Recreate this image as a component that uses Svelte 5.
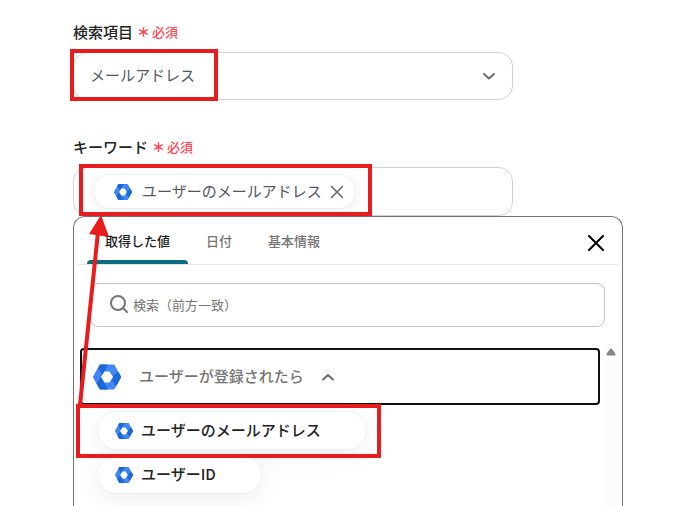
<script>
  const tabs = ['取得した値', '日付', '基本情報']
  const items = ['ユーザーのメールアドレス', 'ユーザーID']

  let activeTab = $state(0)
  let open = $state(true)
  let query = $state('')
</script>


{#snippet logo(size)}
  <svg class="logo" width={size} height={size} viewBox="0 0 28 28" aria-hidden="true">
    <path fill="#4285f4" d="M7.500 1.500H20.500L21.500 2L28 13.500V14.500L21.500 26L20.500 26.500H7.500L6.500 26L0 14.500V13.500L6.500 2Z" />
    <path fill="#1b68d6" d="M7.500 1.500H15L9.500 12L5 5L6.500 2Z" />
    <path fill="#1b68d6" d="M8 14L15 26.500H7.500L6.500 26L3.500 20.500Z" />
    <path fill="#1b68d6" d="M25 8.500L28 13.500V14.500L23 23.500L18 15.500Z" />
    <path fill="#fff" d="M11.500 8.500H16.500L20 14L16.500 19.500H11.500L8 14Z" />
  </svg>
{/snippet}

<main>
  <div class="field">
    <div class="label">
      <label for="item">検索項目</label>
      <span class="required"><i>＊</i>必須</span>
    </div>
    <div class="box">
      <select id="item">
        <option>メールアドレス</option>
      </select>
      <svg class="chevron" width="14" height="14" viewBox="0 0 14 14">
        <path d="M2 5L7 9.500L12 5" />
      </svg>
    </div>
  </div>

  <div class="field">
    <div class="label">
      <label for="keyword">キーワード</label>
      <span class="required"><i>＊</i>必須</span>
    </div>
    <div class="box keyword">
      <span class="chip">
        {@render logo(18)}
        <span>ユーザーのメールアドレス</span>
        <button aria-label="削除">
          <svg width="14" height="14" viewBox="0 0 14 14">
            <path d="M1.500 1.500L12.500 12.500M12.500 1.500L1.500 12.500" />
          </svg>
        </button>
      </span>
      <input id="keyword" type="text">
    </div>
  </div>

  <section class="panel">
    <header>
      <div class="tabs" role="tablist">
        {#each tabs as tab, i}
          <button role="tab" aria-selected={activeTab === i} class:active={activeTab === i}
            onclick={() => activeTab = i}>{tab}</button>
        {/each}
      </div>
      <button class="close" aria-label="閉じる">
        <svg width="16" height="16" viewBox="0 0 16 16">
          <path d="M1 1L15 15M15 1L1 15" />
        </svg>
      </button>
    </header>

    <div class="search">
      <svg width="20" height="20" viewBox="0 0 20 20">
        <circle cx="9" cy="8" r="7" />
        <path d="M14 13L18 17" />
      </svg>
      <input type="search" aria-label="検索" placeholder="検索（前方一致）" bind:value={query}>
    </div>

    <div class="results">
      <div class="list">
        <button class="group" aria-expanded={open} onclick={() => open = !open}>
          {@render logo(28)}
          <span>ユーザーが登録されたら</span>
          <svg class="chevron" width="14" height="14" viewBox="0 0 14 14">
            <path d="M2 9.500L7 5L12 9.500" />
          </svg>
        </button>
        {#if open}
          <div class="items">
            {#each items.filter(item => item.includes(query)) as item}
              <button class="item">
                {@render logo(18)}
                <span>{item}</span>
              </button>
            {/each}
          </div>
        {/if}
      </div>
      <div class="rail">
        <svg width="10" height="8" viewBox="0 0 10 8">
          <path d="M4 1Q5 0 6 1L9.500 6Q9.500 7.500 8.500 7.500H1.500Q0.500 7.500 0.500 6Z" />
        </svg>
      </div>
    </div>
  </section>

  <!-- callouts drawn over the form -->
  <svg class="callouts" width="400" height="480" viewBox="0 0 400 480" aria-hidden="true">
    <rect x="72" y="51" width="144" height="48" />
    <rect x="81" y="166" width="289" height="48" />
    <rect x="78" y="406" width="301" height="50" />
    <path class="line" d="M80 405L98 232" />
    <path class="head" d="M101 215L109 237L89 234Z" />
  </svg>
</main>


<style>

  :global(body) {
    margin: 0;
    background: #fff;
  }

  main {
    position: relative;
    display: flex;
    flex-direction: column;
    box-sizing: border-box;
    height: 100vh;
    padding: 20px 62px 0 73px;
    overflow: hidden;
    font-family: "Noto Sans CJK JP", sans-serif;
    font-size: 15px;
    line-height: 24px;
    color: #222;
  }

  button, input, select {
    margin: 0;
    padding: 0;
    border: 0;
    background: none;
    font: inherit;
    color: inherit;
    outline: none;
  }

  button {
    cursor: pointer;
  }

  svg {
    flex: none;
    fill: none;
    stroke-linecap: round;
    stroke-linejoin: round;
  }

  .field {
    max-width: 440px;
  }

  .field + .field {
    margin-top: 35px;
  }

  .label {
    display: flex;
    align-items: center;
    gap: 4px;
    margin-bottom: 8px;
    font-weight: 500;
  }

  .required {
    display: flex;
    gap: 2px;
    font-size: 13px;
    color: #ff4757;
  }

  .required i {
    font-style: normal;
    font-weight: 900;
  }

  .box {
    display: flex;
    align-items: center;
    box-sizing: border-box;
    min-height: 48px;
    border: 1px solid #cdd1da;
    border-radius: 14px;
    color: #53575e;
  }

  select {
    flex: 1;
    align-self: stretch;
    min-width: 0;
    padding: 0 0 2px 16px;
    appearance: none;
  }

  .chevron {
    stroke: #6b6b6b;
    stroke-width: 2;
  }

  .box .chevron {
    margin-right: 16px;
    pointer-events: none;
  }

  .keyword {
    padding: 7px 20px;
  }

  .keyword input {
    flex: 1;
    min-width: 0;
  }

  .chip {
    display: flex;
    align-items: center;
    height: 33px;
    padding: 0 11px 0 20px;
    border-radius: 17px;
    background: #fff;
    box-shadow: 0 0 2px rgba(0, 0, 0, .08), 0 2px 16px rgba(0, 0, 0, .08);
    white-space: nowrap;
  }

  .chip span {
    margin: 0 8px 0 10px;
    padding-bottom: 2px;
  }

  .chip button {
    display: flex;
    stroke: #666;
    stroke-width: 1.500;
  }

  .panel {
    position: relative;
    display: flex;
    flex: 1;
    flex-direction: column;
    max-width: 548px;
    min-height: 0;
    border: 1px solid #6f7275;
    border-bottom: 0;
    border-radius: 12px 12px 0 0;
    background: #fff;
  }

  header {
    display: flex;
    align-items: center;
    justify-content: space-between;
    margin: 0 4px;
    padding: 0 14px 0 9px;
    border-bottom: 1px solid #e2e4e6;
  }

  .tabs {
    display: flex;
    font-size: 13px;
    font-weight: 500;
    color: #757575;
  }

  .tabs button {
    position: relative;
    height: 47px;
    padding: 0 18px;
  }

  .tabs .active {
    color: #1a1a1a;
  }

  .tabs .active::after {
    content: "";
    position: absolute;
    right: 0;
    bottom: 0;
    left: 0;
    height: 4px;
    border-radius: 4px 4px 0 0;
    background: #0b6b80;
  }

  .close {
    display: flex;
    padding-top: 4px;
    stroke: #000;
    stroke-width: 2;
  }

  .search {
    display: flex;
    align-items: center;
    gap: 4px;
    height: 42px;
    margin: 18px 17px 0 16px;
    padding: 0 18px;
    border: 1px solid #c6c6c6;
    border-radius: 8px;
    font-size: 13px;
    stroke: #757575;
    stroke-width: 2;
  }

  .search input {
    flex: 1;
    min-width: 0;
  }

  .search input::placeholder {
    color: #757575;
    opacity: 1;
  }

  .results {
    display: flex;
    flex: 1;
    gap: 3px;
    min-height: 0;
    margin: 17px 4px 0 6px;
  }

  .list {
    flex: 1;
    padding-top: 4px;
  }

  .group {
    display: flex;
    align-items: center;
    box-sizing: border-box;
    width: 100%;
    height: 57px;
    padding: 0 11px;
    border: 2px solid #111;
    border-radius: 4px;
    font-weight: 500;
    color: #757575;
  }

  .group span {
    margin: 0 17px 0 18px;
    padding-bottom: 2px;
  }

  .items {
    display: flex;
    flex-direction: column;
    align-items: flex-start;
    gap: 7px;
    padding: 7px 18px;
  }

  .item {
    display: flex;
    align-items: center;
    gap: 8px;
    height: 37px;
    padding: 0 45px 0 17px;
    border-radius: 19px;
    background: #fff;
    box-shadow: 0 0 2px rgba(0, 0, 0, .08), 0 6px 24px rgba(0, 0, 0, .07);
    font-weight: 500;
    white-space: nowrap;
  }

  .item span {
    padding-bottom: 2px;
  }

  .rail {
    width: 15px;
    padding-top: 4px;
    background: #fcfcfc;
    text-align: center;
  }

  .rail svg {
    display: block;
    margin: 0 auto;
    fill: #858585;
  }

  .callouts {
    position: absolute;
    top: 0;
    left: 0;
    stroke: #e81c1c;
    stroke-width: 4;
    stroke-linecap: butt;
    stroke-linejoin: miter;
    pointer-events: none;
  }

  .callouts .head {
    fill: #e81c1c;
    stroke: none;
  }

</style>
